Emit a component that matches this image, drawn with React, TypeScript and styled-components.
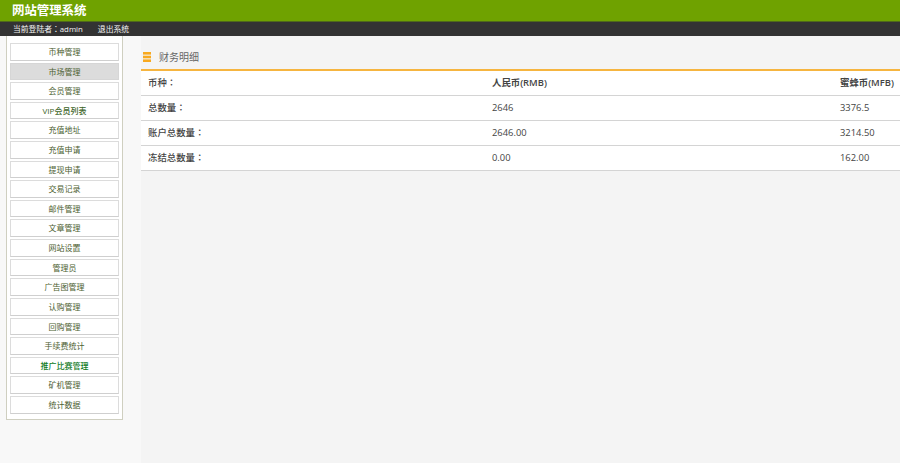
import styled, { createGlobalStyle } from 'styled-components';

const menu = [
  { label: '币种管理' },
  { label: '市场管理', active: true },
  { label: '会员管理' },
  { label: 'VIP会员列表', bold: true },
  { label: '充值地址' },
  { label: '充值申请' },
  { label: '提现申请' },
  { label: '交易记录' },
  { label: '邮件管理' },
  { label: '文章管理' },
  { label: '网站设置' },
  { label: '管理员' },
  { label: '广告图管理' },
  { label: '认购管理' },
  { label: '回购管理' },
  { label: '手续费统计' },
  { label: '推广比赛管理', green: true },
  { label: '矿机管理' },
  { label: '统计数据' },
];

const rows = [
  { name: '币种：', rmb: '人民币(RMB)', mfb: '蜜蜂币(MFB)', head: true },
  { name: '总数量：', rmb: '2646', mfb: '3376.5' },
  { name: '账户总数量：', rmb: '2646.00', mfb: '3214.50' },
  { name: '冻结总数量：', rmb: '0.00', mfb: '162.00' },
];

export default function App() {
  return (
    <Page>
      <GlobalStyle />
      <Header>网站管理系统</Header>
      <TopBar>
        <span>当前登陆者：admin</span>
        <span>退出系统</span>
      </TopBar>
      <Body>
        <SideColumn>
          <Sidebar>
            {menu.map((item) => (
              <MenuItem key={item.label} $active={item.active} $bold={item.bold} $green={item.green}>
                {item.label}
              </MenuItem>
            ))}
          </Sidebar>
        </SideColumn>
        <Main>
          <TitleRow>
            <svg width="8" height="10" viewBox="0 0 8 10">
              <rect x="0" y="0" width="8" height="2.6" fill="#f8a91f" />
              <rect x="0" y="3.7" width="8" height="2.6" fill="#f8a91f" />
              <rect x="0" y="7.4" width="8" height="2.6" fill="#f8a91f" />
            </svg>
            <Title>财务明细</Title>
          </TitleRow>
          <Table>
            {rows.map((row) => (
              <Row key={row.name}>
                <Cell $weight={500}>{row.name}</Cell>
                <Cell $weight={row.head ? 600 : 400}>{row.rmb}</Cell>
                <Cell $weight={row.head ? 600 : 400}>{row.mfb}</Cell>
              </Row>
            ))}
          </Table>
        </Main>
      </Body>
    </Page>
  );
}

const GlobalStyle = createGlobalStyle`
  html, body {
    margin: 0;
    padding: 0;
    overflow: hidden;
  }
  body {
    background: #f8f8f8;
    font-family: "Open Sans", "Noto Sans CJK JP", sans-serif;
  }
`;

const Page = styled.div`
  width: 900px;
  height: 463px;
  display: flex;
  flex-direction: column;
`;

const Header = styled.header`
  height: 21px;
  line-height: 22px;
  padding-left: 12px;
  background: #6fa200;
  color: #fff;
  font-size: 12.4px;
  font-weight: 700;
`;

const TopBar = styled.div`
  height: 15px;
  display: flex;
  gap: 15px;
  padding-left: 13px;
  background: #333;
  border-top: 1px solid #4f6a1a;
  box-sizing: border-box;
  color: #f4f4f4;
  font-size: 7.8px;
  line-height: 14px;
`;

const Body = styled.div`
  flex: 1;
  display: flex;
  min-height: 0;
`;

const SideColumn = styled.div`
  width: 141px;
  flex: none;
  padding-left: 6px;
  box-sizing: border-box;
`;

const Sidebar = styled.nav`
  width: 117px;
  height: 384px;
  box-sizing: border-box;
  display: flex;
  flex-direction: column;
  gap: 2px;
  padding: 7px 3px 0;
  background: #fff;
  border: 1px solid #cfcfc0;
  border-top: none;
`;

const MenuItem = styled.a<{ $active?: boolean; $bold?: boolean; $green?: boolean }>`
  height: 17.62px;
  flex: none;
  box-sizing: border-box;
  text-align: center;
  font-size: 8px;
  line-height: 15.5px;
  font-weight: ${(p) => (p.$bold || p.$green ? 500 : 400)};
  color: ${(p) => (p.$green ? '#0f7a1c' : p.$bold ? '#3b6326' : '#4c6030')};
  background: ${(p) => (p.$active ? '#dcdcdc' : '#fff')};
  border: 1px solid ${(p) => (p.$active ? '#d6d6d6' : '#dcdcdc')};
  border-bottom: 1px solid ${(p) => (p.$active ? '#d6d6d6' : '#cfcfcf')};
`;

const Main = styled.main`
  flex: 1;
  min-width: 0;
  background: #f4f4f4;
`;

const TitleRow = styled.div`
  height: 33px;
  display: flex;
  align-items: center;
  gap: 8px;
  padding-left: 2px;
  box-sizing: border-box;
  padding-top: 8px;
`;

const Title = styled.h2`
  margin: 0;
  font-size: 10px;
  font-weight: 400;
  color: #666;
`;

const Table = styled.div`
  background: #fff;
  border-top: 2px solid #f6b540;
`;

const Row = styled.div`
  display: grid;
  grid-template-columns: 344px 348px 1fr;
  height: 25px;
  box-sizing: border-box;
  align-items: center;
  padding-left: 7px;
  padding-bottom: 2px;
  border-bottom: 1px solid #d4d4d4;
`;

const Cell = styled.div<{ $weight: number }>`
  font-size: 9.4px;
  font-weight: ${(p) => p.$weight};
  color: #444;
`;
